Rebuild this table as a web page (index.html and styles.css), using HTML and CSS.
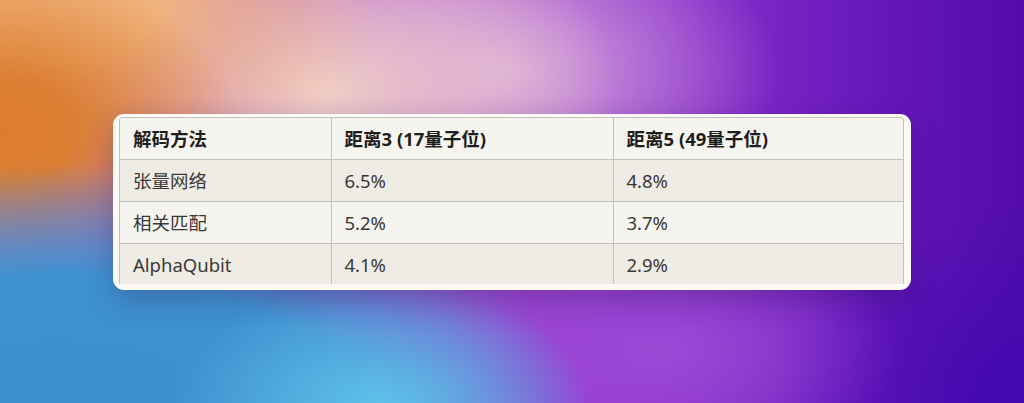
FILE: index.html
```
<!DOCTYPE html>
<html lang="zh">
<head>
    <meta charset="UTF-8">
    <meta name="viewport" content="width=device-width, initial-scale=1.0">
    <title>解码方法对比</title>
    <link rel="stylesheet" href="styles.css">
</head>
<body>
    <div class="card">
        <div class="table-wrap">
            <table class="results">
                <colgroup>
                    <col class="col-method">
                    <col class="col-d3">
                    <col class="col-d5">
                </colgroup>
                <thead>
                    <tr>
                        <th>解码方法</th>
                        <th>距离3 (17量子位)</th>
                        <th>距离5 (49量子位)</th>
                    </tr>
                </thead>
                <tbody>
                    <tr>
                        <td>张量网络</td>
                        <td>6.5%</td>
                        <td>4.8%</td>
                    </tr>
                    <tr>
                        <td>相关匹配</td>
                        <td>5.2%</td>
                        <td>3.7%</td>
                    </tr>
                    <tr>
                        <td>AlphaQubit</td>
                        <td>4.1%</td>
                        <td>2.9%</td>
                    </tr>
                </tbody>
            </table>
        </div>
    </div>
</body>
</html>
```

FILE: styles.css
```
html, body {
    height: 100%;
}

body {
    margin: 0;
    display: flex;
    align-items: center;
    justify-content: center;
    font-family: "Noto Sans", "Noto Sans CJK SC", sans-serif;
    color: #2b2a28;
    background-color: #7a2ed0;
    /* soft mesh-like backdrop: orange top-left, blue bottom-left, purple right */
    background-image:
        radial-gradient(ellipse 210px 120px at 380px 405px, rgba(96, 196, 236, 0.95) 0%, rgba(96, 196, 236, 0) 100%),
        radial-gradient(ellipse 560px 280px at 60px 430px, #3c8dcc 0%, #3f92d0 55%, rgba(63, 146, 208, 0) 95%),
        radial-gradient(ellipse 240px 165px at 0px 130px, #dc7c2e 0%, #dc7e32 30%, rgba(220, 124, 46, 0) 100%),
        radial-gradient(ellipse 340px 190px at 40px 0px, #f0b27a 0%, #f0b47e 35%, rgba(240, 180, 126, 0) 100%),
        radial-gradient(ellipse 300px 190px at 320px 90px, #f2cfc6 0%, rgba(242, 207, 198, 0) 100%),
        radial-gradient(ellipse 280px 170px at 500px 70px, #d8a8dc 0%, rgba(216, 168, 220, 0) 100%),
        radial-gradient(ellipse 240px 130px at 660px 350px, #9c4ad6 0%, rgba(156, 74, 214, 0) 100%),
        radial-gradient(ellipse 260px 200px at 1024px 403px, #4208b0 0%, rgba(66, 8, 176, 0) 100%),
        linear-gradient(90deg, #b466d4 0%, #a24cd2 45%, #8a30cc 65%, #6818bc 85%, #520caa 100%);
}

.card {
    width: 785px;
    height: 172px;
    padding: 3px 7px 1px 6px;
    background: #fbfaf7;
    border-radius: 11px;
    box-shadow: 0 10px 28px rgba(40, 20, 80, 0.28);
}

.table-wrap {
    height: 166px;
    border: 1px solid #c4c1b9;
    border-bottom: none;
    border-radius: 4px 4px 0 0;
    overflow: hidden;
    background: #f7f6f2;
}

.results {
    width: 100%;
    border-collapse: collapse;
    table-layout: fixed;
    font-size: 18.5px;
}

.col-method {
    width: 211px;
}

.col-d3 {
    width: 282px;
}

.results th,
.results td {
    height: 41px;
    padding: 0 13px;
    text-align: left;
    border-right: 1px solid #c4c1b9;
    border-bottom: 1px solid #c4c1b9;
}

.results th:last-child,
.results td:last-child {
    border-right: none;
}

.results tbody tr:last-child td {
    border-bottom: none;
}

.results th {
    font-weight: 700;
    color: #1f1e1c;
    background: #f5f4ef;
}

.results td {
    color: #3a3936;
}

.results tbody tr:nth-child(odd) td {
    background: #efece5;
}

.results tbody tr:nth-child(even) td {
    background: #f5f4ef;
}
```
